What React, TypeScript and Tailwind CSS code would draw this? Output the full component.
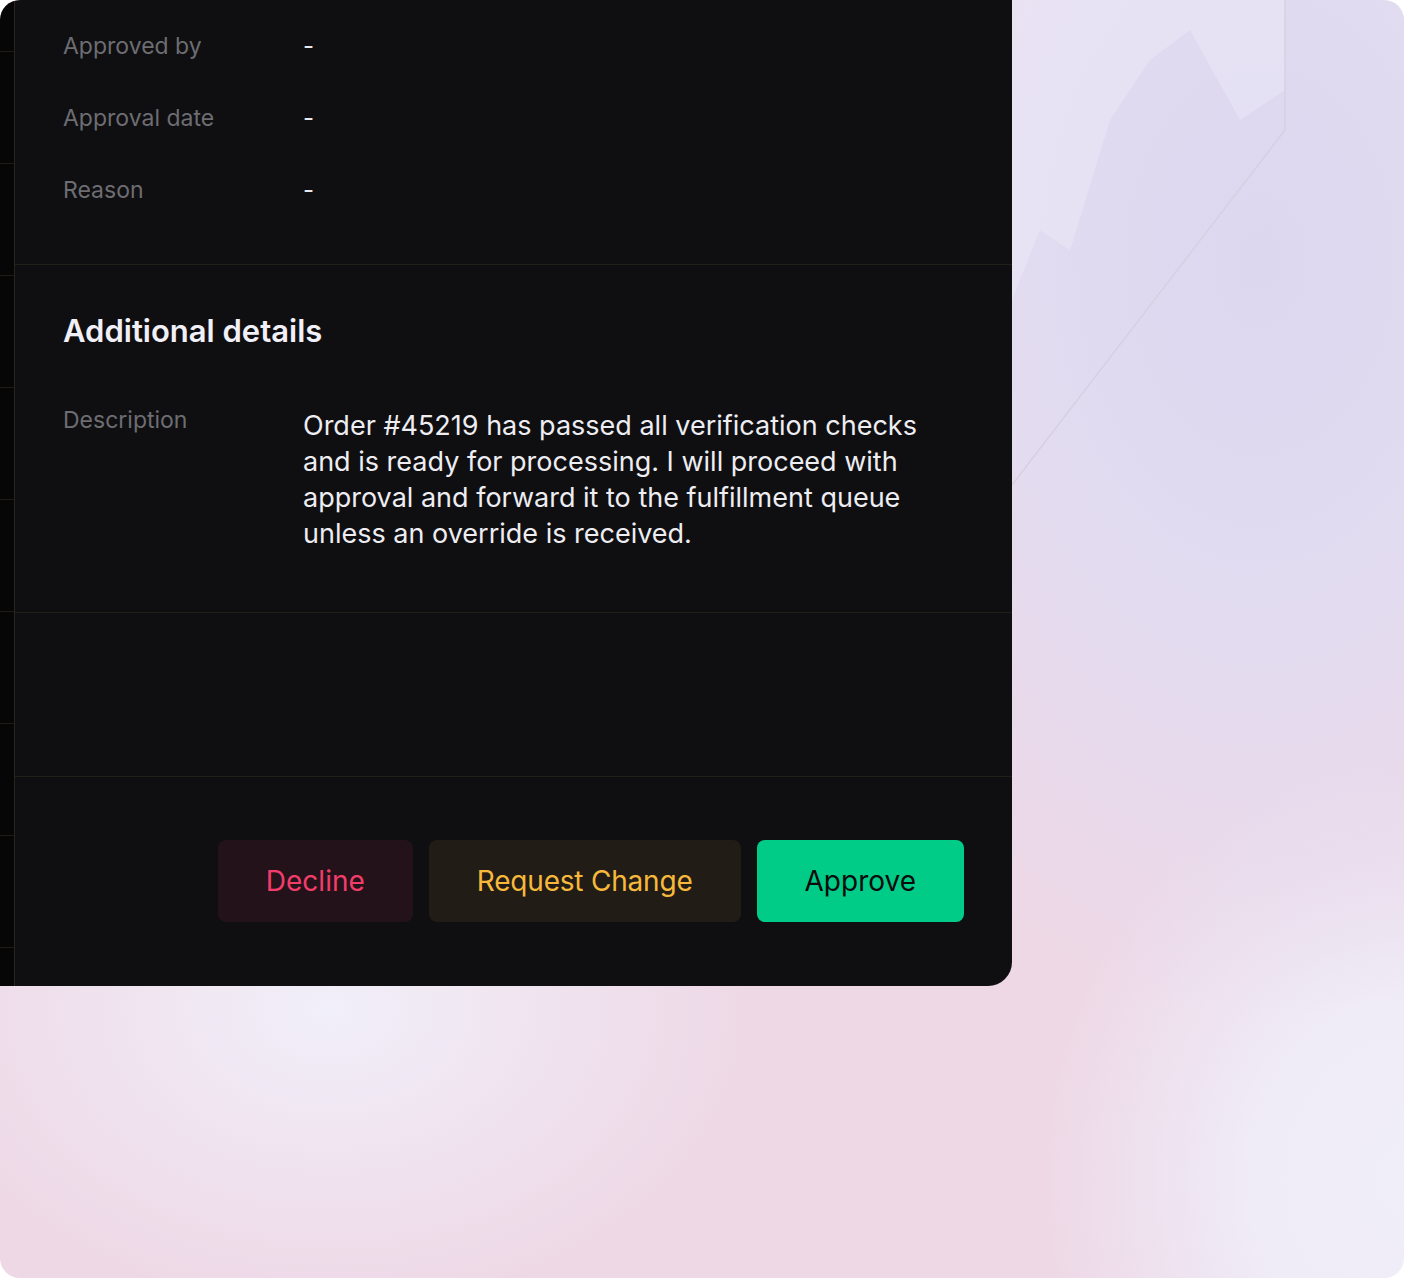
import React from 'react';

const font = { fontFamily: 'Inter, "Noto Sans", sans-serif' };

function InfoRow({ label, value }: { label: string; value: string }) {
  return (
    <div className="flex h-[72px] items-center">
      <span className="w-[240px] text-[23px] text-[#6d6d72]">{label}</span>
      <span className="text-[24px] text-[#e9e9ee]">{value}</span>
    </div>
  );
}

function Backdrop() {
  return (
    <svg
      className="pointer-events-none absolute inset-0"
      width="1404"
      height="1278"
      viewBox="0 0 1404 1278"
      fill="none"
    >
      <path
        d="M1012 300 L1040 230 L1070 250 L1110 120 L1150 60 L1190 30 L1240 120 L1285 90 L1285 0 L1012 0 Z"
        fill="#eeebf8"
        opacity="0.45"
      />
      <path d="M1285 0 L1285 130 L1012 485" stroke="#d6d0e2" strokeWidth="1.5" />
    </svg>
  );
}

export default function App() {
  const stripRows = Array.from({ length: 8 });

  return (
    <div className="bg-white" style={font}>
      <div className="relative h-[1278px] w-[1404px] overflow-hidden rounded-[20px] bg-[#eed8e6] bg-[radial-gradient(ellipse_520px_760px_at_1260px_260px,#dcd6ef_0%,#e2dcf1_45%,transparent_100%),radial-gradient(ellipse_420px_300px_at_330px_1010px,#f1eff9_0%,transparent_100%),radial-gradient(ellipse_360px_420px_at_1404px_1180px,#f0eef9_0%,#efecf8_40%,transparent_100%)]">
        <Backdrop />

        <div className="relative flex h-[986px] w-[1012px]">
          {/* table rows peeking behind the panel */}
          <div className="flex w-[14px] flex-col bg-[#060606]">
            <div className="h-[52px] border-b border-[#1f1c18]" />
            {stripRows.map((_, i) => (
              <div key={i} className="h-[112px] border-b border-[#1f1c18]" />
            ))}
          </div>

          <div className="flex flex-1 flex-col rounded-br-[24px] border-l border-[#2a251c] bg-[#0f0f11]">
            <section className="border-b border-[#221f1a] px-12 pt-[10px] pb-[38px]">
              <InfoRow label="Approved by" value="-" />
              <InfoRow label="Approval date" value="-" />
              <InfoRow label="Reason" value="-" />
            </section>

            <section className="border-b border-[#221f1a] px-12 pt-[48px] pb-[60px]">
              <h2 className="text-[31px] leading-[36px] font-semibold text-[#f1eff7]">
                Additional details
              </h2>
              <div className="mt-[59px] flex items-start">
                <span className="w-[240px] text-[23px] leading-[24px] text-[#6d6d72]">
                  Description
                </span>
                <p className="w-[640px] text-[27px] leading-[36px] text-[#ededf2]">
                  Order #45219 has passed all verification checks and is ready for
                  processing. I will proceed with approval and forward it to the
                  fulfillment queue unless an override is received.
                </p>
              </div>
            </section>

            <section className="h-[164px] border-b border-[#221f1a]" />

            <section className="flex flex-1 items-start justify-end gap-4 px-12 pt-[63px]">
              <button
                type="button"
                className="h-[82px] rounded-lg bg-[#231219] px-12 text-[28px] text-[#f23d6b]"
              >
                Decline
              </button>
              <button
                type="button"
                className="h-[82px] rounded-lg bg-[#211c16] px-12 text-[28px] tracking-[-0.2px] text-[#f6b93b]"
              >
                Request Change
              </button>
              <button
                type="button"
                className="h-[82px] rounded-lg bg-[#00cc88] px-12 text-[28px] text-[#0b0b0c]"
              >
                Approve
              </button>
            </section>
          </div>
        </div>
      </div>
    </div>
  );
}
